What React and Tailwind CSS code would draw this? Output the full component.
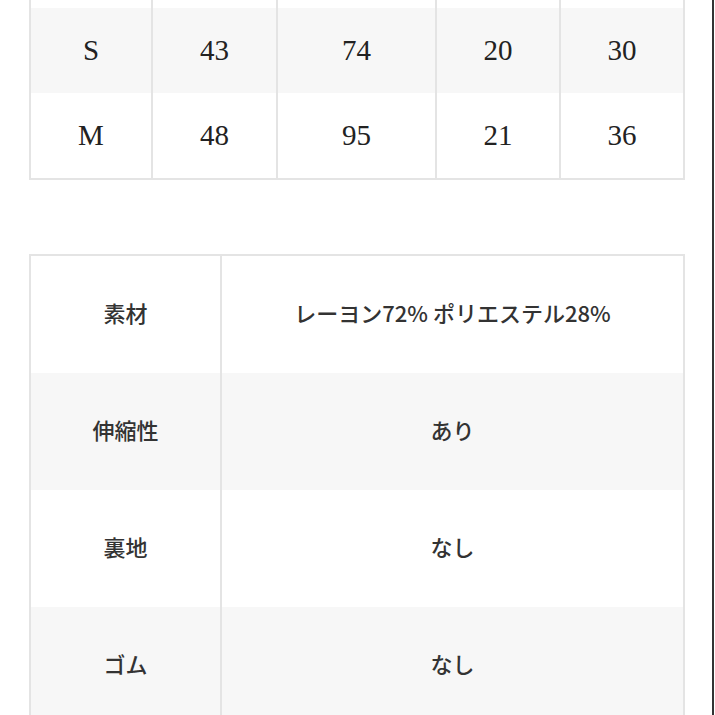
export default function App() {
  const sizes = [
    { bg: "bg-white", h: "h-[8px]", cells: ["", "", "", "", ""] },
    { bg: "bg-[#f7f7f7]", h: "h-[85px]", cells: ["S", "43", "74", "20", "30"] },
    { bg: "bg-white", h: "h-[85px]", cells: ["M", "48", "95", "21", "36"] },
  ];
  const cols = ["w-[122px]", "w-[125px]", "w-[159px]", "w-[124px]", "w-[124px]"];
  const specs = [
    ["素材", "レーヨン72% ポリエステル28%", "bg-white"],
    ["伸縮性", "あり", "bg-[#f7f7f7]"],
    ["裏地", "なし", "bg-white"],
    ["ゴム", "なし", "bg-[#f7f7f7]"],
  ];
  return (
    <div className="flex w-[715px] h-[715px] overflow-hidden bg-white">
      <div className="w-[712px] shrink-0 pl-[29px]">
        <div className="w-[656px] border-x-2 border-b-2 border-[#e4e4e4] text-[29px] text-[#222] font-['Liberation_Serif',serif]">
          {sizes.map((r, i) => (
            <div key={i} className={`flex ${r.bg} ${r.h}`}>
              {r.cells.map((c, j) => (
                <div
                  key={j}
                  className={`${cols[j]} flex items-center justify-center ${j < 4 ? "border-r-2 border-[#e4e4e4]" : "flex-1"}`}
                >
                  {c}
                </div>
              ))}
            </div>
          ))}
        </div>
        <div className="mt-[74px] w-[656px] border-x-2 border-t-2 border-[#e4e4e4] text-[22px] font-medium text-[#333] font-['Noto_Sans_CJK_JP',sans-serif]">
          {specs.map(([k, v, bg], i) => (
            <div key={i} className={`flex h-[117px] ${bg}`}>
              <div className="w-[191px] pb-[4px] border-r-2 border-[#e4e4e4] flex items-center justify-center">{k}</div>
              <div className="flex-1 pb-[4px] flex items-center justify-center">{v}</div>
            </div>
          ))}
        </div>
      </div>
      <div className="w-[2px] shrink-0 bg-[#333]"></div>
      <div className="flex-1 bg-white"></div>
    </div>
  );
}
